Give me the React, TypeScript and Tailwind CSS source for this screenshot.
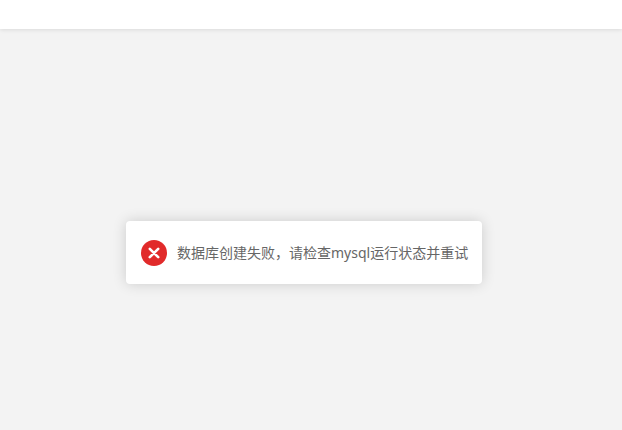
import React from "react";

export default function App() {
  return (
    <div className="flex h-[430px] w-[622px] flex-col overflow-hidden bg-[#f3f3f3] font-['Noto_Sans','Noto_Sans_CJK_SC',sans-serif]">
      <header className="h-[29px] shrink-0 bg-white shadow-[0_1px_4px_rgba(0,0,0,0.1)]" />
      <main className="flex flex-1 items-start pt-[192px] pl-[126px]">
        <div className="flex h-[63px] w-[356px] items-center rounded-[4px] bg-white pl-[15px] shadow-[0_0_14px_rgba(0,0,0,0.16)]">
          <div className="flex h-[26px] w-[26px] shrink-0 items-center justify-center rounded-full bg-[#e12a2a]">
            <svg width="12" height="12" viewBox="0 0 12 12" fill="none" stroke="white" strokeWidth="2.6" strokeLinecap="round">
              <path d="M1.8 1.8 L10.2 10.2 M10.2 1.8 L1.8 10.2" />
            </svg>
          </div>
          <span className="ml-[10px] whitespace-nowrap text-[14px] text-[#666666]">数据库创建失败，请检查mysql运行状态并重试</span>
        </div>
      </main>
    </div>
  );
}
